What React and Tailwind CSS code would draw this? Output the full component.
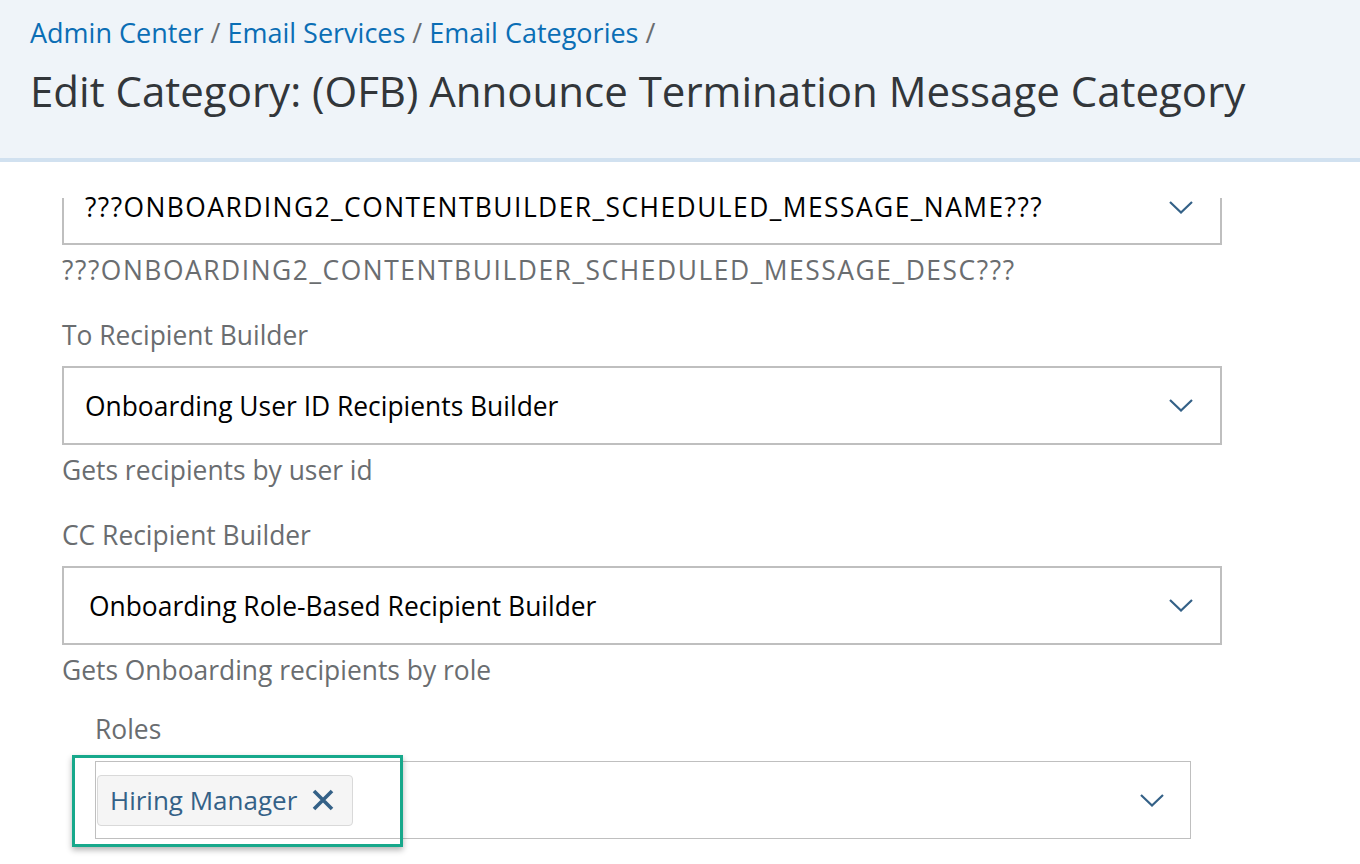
import React from "react";

const FONT = { fontFamily: '"Open Sans", "Noto Sans", Arial, sans-serif' };

function Chevron({ className = "" }) {
  return (
    <svg width="24" height="13" viewBox="0 0 24 13" className={className}>
      <path d="M1 1 L12 11.5 L23 1" fill="none" stroke="#346187" strokeWidth="2.2" />
    </svg>
  );
}

function SelectBox({ text, pl = "pl-[21px]" }) {
  return (
    <div className={`w-[1160px] h-[79px] border-2 border-[#bfbfbf] flex items-center justify-between ${pl} pr-[27px]`}>
      <span className="text-[26.4px] leading-[30px] text-[#000]">{text}</span>
      <Chevron />
    </div>
  );
}

export default function App() {
  return (
    <div className="w-[1360px] h-[864px] overflow-hidden bg-white relative" style={FONT}>
      <header className="h-[162px] bg-[#eff4f9] border-b-4 border-[#d1e1f0] pl-[30px] pt-[17px]">
        <div className="text-[27px] leading-[32px] text-[#6a6d70] flex gap-[7px]">
          <span className="text-[#0b6eb5]">Admin Center</span>
          <span>/</span>
          <span className="text-[#0b6eb5]">Email Services</span>
          <span>/</span>
          <span className="text-[#0b6eb5]">Email Categories</span>
          <span>/</span>
        </div>
        <h1 className="mt-[17px] text-[42px] leading-[50px] text-[#32363a]">
          Edit Category: (OFB) Announce Termination Message Category
        </h1>
      </header>

      <main className="pl-[62px]">
        <div className="mt-[36px] w-[1160px] h-[47px] border-2 border-t-0 border-[#bfbfbf] flex items-start justify-between pl-[21px] pr-[27px]">
          <span className="text-[26.4px] leading-[20px] text-[#000] tracking-[1.45px] -mt-[1px]">???ONBOARDING2_CONTENTBUILDER_SCHEDULED_MESSAGE_NAME???</span>
          <Chevron className="mt-[3px]" />
        </div>
        <p className="mt-[10px] text-[26.4px] leading-[30px] text-[#6a6d70] tracking-[1.55px]">???ONBOARDING2_CONTENTBUILDER_SCHEDULED_MESSAGE_DESC???</p>

        <p className="mt-[35px] text-[26.4px] leading-[30px] text-[#6a6d70]">To Recipient Builder</p>
        <div className="mt-[16px]">
          <SelectBox text="Onboarding User ID Recipients Builder" />
        </div>
        <p className="mt-[10px] text-[26.4px] leading-[30px] text-[#6a6d70]">Gets recipients by user id</p>

        <p className="mt-[35px] text-[26.4px] leading-[30px] text-[#6a6d70]">CC Recipient Builder</p>
        <div className="mt-[16px]">
          <SelectBox text="Onboarding Role-Based Recipient Builder" pl="pl-[25px]" />
        </div>
        <p className="mt-[10px] text-[26.4px] leading-[30px] text-[#6a6d70]">Gets Onboarding recipients by role</p>

        <div className="pl-[33px] pt-[29px] relative">
          <p className="text-[26.4px] leading-[30px] text-[#6a6d70]">Roles</p>
          <div className="mt-[17px] w-[1096px] h-[78px] border-[1.5px] border-[#bfbfbf] flex items-center justify-between pl-[1px] pr-[26px]">
            <div className="h-[51px] w-[256px] bg-[#f5f5f5] border border-[#d9d9d9] rounded-[4px] flex items-center pl-[12px] gap-[15px]">
              <span className="text-[26px] leading-[30px] text-[#346187]">Hiring Manager</span>
              <svg width="22" height="22" viewBox="0 0 22 22">
                <path d="M2 2 L20 20 M20 2 L2 20" stroke="#346187" strokeWidth="3.6" strokeLinecap="butt" />
              </svg>
            </div>
            <Chevron />
          </div>
          <div className="absolute left-[10px] top-[70px] w-[331px] h-[92px] border-[3px] border-[#17a88b] shadow-[0_3px_6px_rgba(0,0,0,0.3)] pointer-events-none" />
        </div>
      </main>
    </div>
  );
}
